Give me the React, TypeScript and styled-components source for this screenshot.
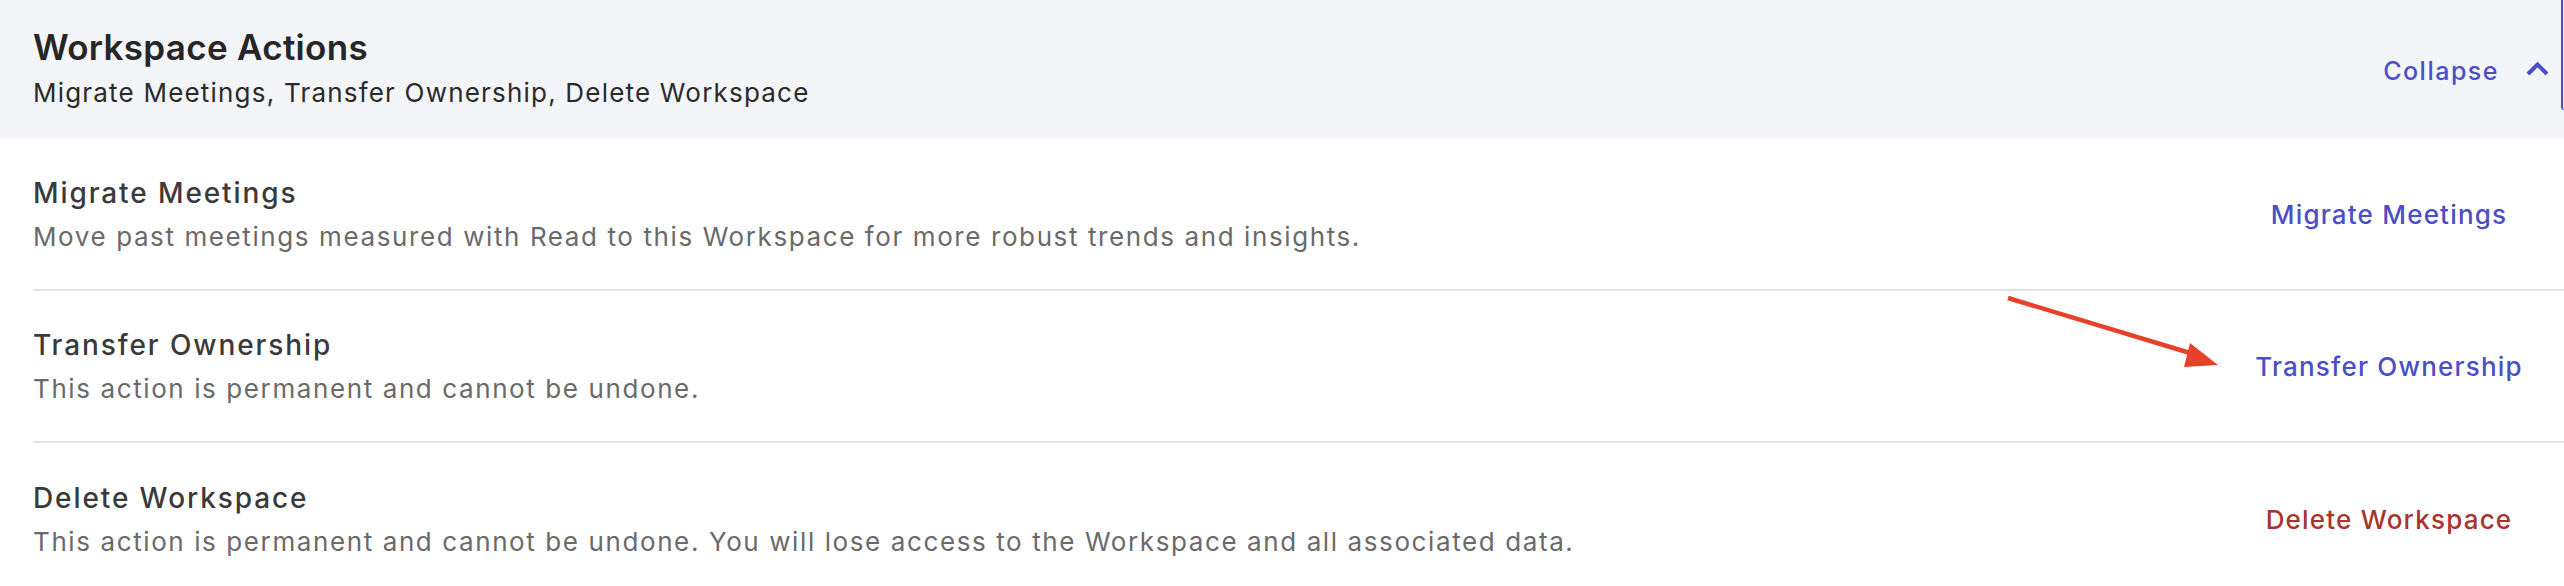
import React from 'react';
import styled, { createGlobalStyle } from 'styled-components';

const GlobalStyle = createGlobalStyle`
  html, body {
    margin: 0;
    padding: 0;
    background: #ffffff;
  }
  body {
    font-family: Inter, "Noto Sans", "Liberation Sans", sans-serif;
    -webkit-font-smoothing: antialiased;
  }
`;

type Action = {
  title: string;
  description: string;
  label: string;
  danger?: boolean;
};

const ACTIONS: Action[] = [
  {
    title: 'Migrate Meetings',
    description: 'Move past meetings measured with Read to this Workspace for more robust trends and insights.',
    label: 'Migrate Meetings'
  },
  {
    title: 'Transfer Ownership',
    description: 'This action is permanent and cannot be undone.',
    label: 'Transfer Ownership'
  },
  {
    title: 'Delete Workspace',
    description: 'This action is permanent and cannot be undone. You will lose access to the Workspace and all associated data.',
    label: 'Delete Workspace',
    danger: true
  }
];

const ChevronUp = () => (
  <svg width="23" height="14" viewBox="0 0 23 14" fill="none">
    <path d="M2 12L11.5 2.5L21 12" stroke="#4a4fc8" strokeWidth="4" strokeLinecap="butt" />
  </svg>
);

const Pointer = () => (
  <svg width="220" height="80" viewBox="0 0 220 80" fill="none">
    <line x1="4" y1="4" x2="196" y2="62" stroke="#e8412b" strokeWidth="4.5" />
    <path d="M186 49L214 71L180 73Z" fill="#e8412b" />
  </svg>
);

const App = () => {
  return (
    <>
      <GlobalStyle />
      <Panel>
        <Header>
          <HeaderText>
            <Title>Workspace Actions</Title>
            <Subtitle>Migrate Meetings, Transfer Ownership, Delete Workspace</Subtitle>
          </HeaderText>
          <CollapseButton type="button">
            Collapse
            <ChevronUp />
          </CollapseButton>
        </Header>

        <List>
          {ACTIONS.map(item => (
            <Row key={item.title}>
              <RowText>
                <RowTitle>{item.title}</RowTitle>
                <RowDescription>{item.description}</RowDescription>
              </RowText>
              <ActionCell>
                <ActionLink type="button" $danger={item.danger}>{item.label}</ActionLink>
              </ActionCell>
            </Row>
          ))}
        </List>

        <Annotation>
          <Pointer />
        </Annotation>
        <EdgeFocus />
      </Panel>
    </>
  );
};

export default App;

const Panel = styled.section`
  position: relative;
  width: 2564px;
  height: 586px;
  overflow: hidden;
  background: #ffffff;
`;

const Header = styled.header`
  display: flex;
  align-items: center;
  justify-content: space-between;
  height: 139px;
  box-sizing: border-box;
  padding: 0 15px 3px 33px;
  background: #f4f5f9;
`;

const HeaderText = styled.div`
  display: flex;
  flex-direction: column;
  gap: 6px;
`;

const Title = styled.h2`
  margin: 0;
  font-size: 35px;
  line-height: 44px;
  font-weight: 600;
  color: #262626;
  letter-spacing: 0.3px;
`;

const Subtitle = styled.p`
  margin: 0;
  font-size: 26px;
  line-height: 36px;
  font-weight: 400;
  color: #2a2a2a;
  letter-spacing: 1.2px;
`;

const CollapseButton = styled.button`
  display: flex;
  align-items: center;
  gap: 27px;
  margin-top: 6px;
  padding: 0;
  border: none;
  background: none;
  font-family: inherit;
  font-size: 25px;
  font-weight: 500;
  color: #4a4fc8;
  letter-spacing: 1.5px;
  cursor: pointer;

  svg {
    margin-top: -4px;
  }
`;

const List = styled.div`
  padding-left: 33px;
`;

const Row = styled.div`
  display: flex;
  align-items: center;
  height: 152px;
  box-sizing: border-box;
  border-bottom: 2px solid #e2e2e2;

  &:last-child {
    border-bottom: none;
  }
`;

const RowText = styled.div`
  flex: 1;
  display: flex;
  flex-direction: column;
  gap: 4px;
  margin-top: 1px;
`;

const RowTitle = styled.h3`
  margin: 0;
  font-size: 28px;
  line-height: 40px;
  font-weight: 500;
  color: #3a3a3a;
  letter-spacing: 1.9px;
`;

const RowDescription = styled.p`
  margin: 0;
  font-size: 26px;
  line-height: 40px;
  font-weight: 400;
  color: #6a6a6a;
  letter-spacing: 1.6px;
`;

const ActionCell = styled.div`
  width: 350px;
  display: flex;
  justify-content: center;
`;

const ActionLink = styled.button<{ $danger?: boolean }>`
  padding: 0;
  border: none;
  background: none;
  font-family: inherit;
  font-size: 26px;
  font-weight: 500;
  letter-spacing: 1.2px;
  color: ${({ $danger }) => ($danger ? '#a8352c' : '#4a4fc8')};
  cursor: pointer;
`;

const Annotation = styled.div`
  position: absolute;
  left: 2004px;
  top: 294px;
  pointer-events: none;
`;

const EdgeFocus = styled.div`
  position: absolute;
  top: 0;
  right: 0;
  width: 3px;
  height: 110px;
  border-left: 2px solid #4a4fc8;
  border-bottom-left-radius: 6px;
  box-sizing: border-box;
`;
